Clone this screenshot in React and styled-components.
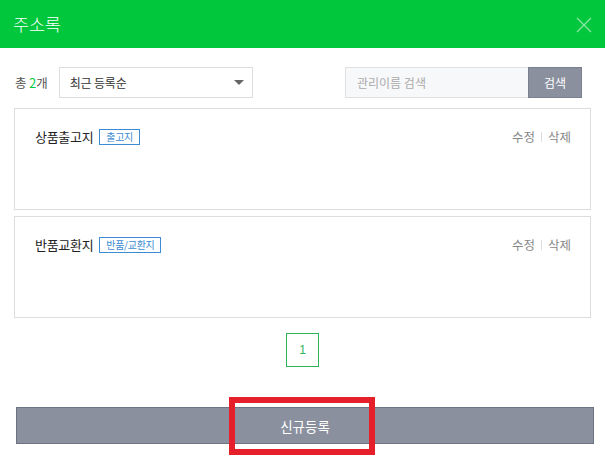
import React from "react";
import styled, {createGlobalStyle} from "styled-components";

const GlobalStyle = createGlobalStyle`
    html, body {
        margin: 0;
        padding: 0;
        background: #fff;
    }
    body {
        font-family: "Noto Sans CJK KR", "Noto Sans", sans-serif;
        color: #333;
    }
`;

const Modal = styled.div`
    position: relative;
    width: 605px;
    height: 463px;
    background: #fff;
    overflow: hidden;
`;

const Header = styled.div`
    height: 48px;
    background-color: #00c73c;
    display: flex;
    align-items: center;
    justify-content: space-between;
    padding: 0 13px 0 13px;
    box-sizing: border-box;
`;

const Title = styled.h1`
    margin: 0 0 2px 0;
    font-size: 17.5px;
    font-weight: 300;
    color: #fff;
    letter-spacing: -0.2px;
`;

const CloseButton = styled.button`
    border: 0;
    padding: 0;
    background: none;
    width: 16px;
    height: 16px;
    margin-top: 1px;
    cursor: pointer;
`;

const Toolbar = styled.div`
    display: flex;
    align-items: center;
    padding: 19px 23px 0 15px;
    height: 31px;
`;

const Count = styled.span`
    font-size: 12.5px;
    color: #555;
    margin-right: 11px;
    em {
        font-style: normal;
        color: #00c73c;
    }
`;

const Select = styled.div`
    width: 194px;
    height: 31px;
    box-sizing: border-box;
    border: 1px solid #ddd;
    display: flex;
    align-items: center;
    justify-content: space-between;
    padding: 0 8px 0 10px;
    font-size: 12px;
    color: #333;
    letter-spacing: -0.2px;
`;

const Caret = styled.span`
    width: 0;
    height: 0;
    border-left: 5px solid transparent;
    border-right: 5px solid transparent;
    border-top: 5px solid #666;
`;

const Search = styled.div`
    margin-left: auto;
    display: flex;
    height: 31px;
`;

const SearchInput = styled.div`
    width: 183px;
    box-sizing: border-box;
    border: 1px solid #e0e0e0;
    border-right: 0;
    background: #f7f8fa;
    display: flex;
    align-items: center;
    padding-left: 11px;
    font-size: 12px;
    color: #aaa;
`;

const SearchButton = styled.button`
    width: 54px;
    border: 1px solid #7a8090;
    background: #8a909e;
    color: #fff;
    font-family: inherit;
    font-size: 12px;
    padding: 0;
`;

const List = styled.div`
    display: flex;
    flex-direction: column;
    gap: 6px;
    padding: 10px 14px 0 14px;
`;

const Card = styled.div`
    height: 102px;
    box-sizing: border-box;
    border: 1px solid #ddd;
    padding: 20px 19px 0 20px;
    display: flex;
    align-items: flex-start;
    justify-content: space-between;
`;

const CardTitle = styled.div`
    display: flex;
    align-items: center;
    font-size: 13px;
    color: #222;
    letter-spacing: -0.3px;
    line-height: 16px;
`;

const Tag = styled.span`
    margin-left: 6px;
    border: 1px solid #3d8bd2;
    color: #3d8bd2;
    font-size: 10px;
    line-height: 14px;
    padding: 0 6px;
    letter-spacing: -0.3px;
`;

const Actions = styled.div`
    display: flex;
    align-items: center;
    font-size: 12.5px;
    color: #888;
    line-height: 16px;
`;

const Divider = styled.span`
    width: 1px;
    height: 10px;
    background: #ddd;
    margin: 0 6px;
`;

const Pager = styled.div`
    display: flex;
    justify-content: center;
    padding-top: 15px;
`;

const PageNumber = styled.span`
    width: 33px;
    height: 34px;
    box-sizing: border-box;
    border: 1px solid #2db359;
    color: #2db359;
    font-family: "Liberation Sans", sans-serif;
    font-size: 12px;
    display: flex;
    align-items: center;
    justify-content: center;
`;

const Footer = styled.div`
    padding: 40px 11px 0 16px;
`;

const RegisterButton = styled.button`
    width: 100%;
    height: 37px;
    border: 1px solid #6d7383;
    background: #8a909e;
    color: #fff;
    font-family: inherit;
    font-size: 13.5px;
    padding: 0;
`;

const Highlight = styled.div`
    position: absolute;
    left: 229px;
    top: 397px;
    width: 146px;
    height: 58px;
    box-sizing: border-box;
    border: 6px solid #e5202a;
    pointer-events: none;
`;

const addresses = [
    {name: "상품출고지", tag: "출고지"},
    {name: "반품교환지", tag: "반품/교환지"},
];

const App = () => {
    return (
        <>
            <GlobalStyle/>
            <Modal>
                <Header>
                    <Title>주소록</Title>
                    <CloseButton aria-label="닫기">
                        <svg width="16" height="16" viewBox="0 0 16 16">
                            <path d="M1 1L15 15M15 1L1 15" stroke="rgba(255,255,255,0.55)" strokeWidth="1.2"/>
                        </svg>
                    </CloseButton>
                </Header>

                <Toolbar>
                    <Count>총 <em>2</em>개</Count>
                    <Select>
                        최근 등록순
                        <Caret/>
                    </Select>
                    <Search>
                        <SearchInput>관리이름 검색</SearchInput>
                        <SearchButton>검색</SearchButton>
                    </Search>
                </Toolbar>

                <List>
                    {addresses.map((item, index) => (
                        <Card key={index}>
                            <CardTitle>
                                {item.name}
                                <Tag>{item.tag}</Tag>
                            </CardTitle>
                            <Actions>
                                수정<Divider/>삭제
                            </Actions>
                        </Card>
                    ))}
                </List>

                <Pager>
                    <PageNumber>1</PageNumber>
                </Pager>

                <Footer>
                    <RegisterButton>신규등록</RegisterButton>
                </Footer>

                <Highlight/>
            </Modal>
        </>
    );
};

export default App;
